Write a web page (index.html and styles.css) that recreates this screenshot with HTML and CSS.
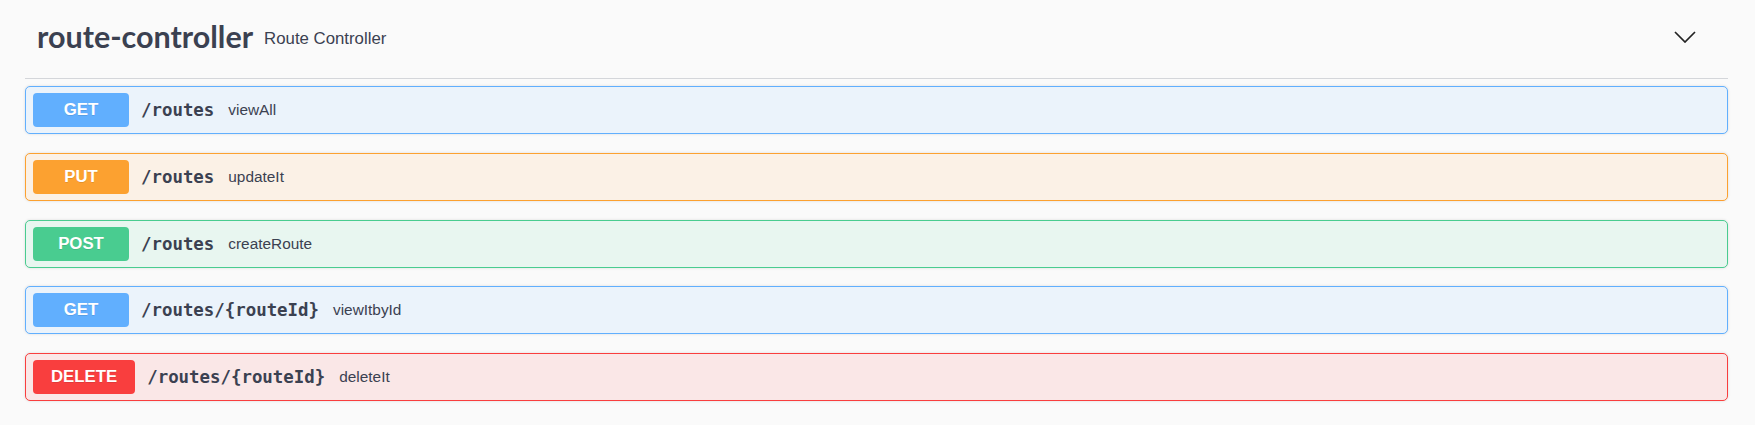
FILE: index.html
```html
<!DOCTYPE html>
<html>
<head>
<meta charset="utf-8">
<link rel="stylesheet" href="styles.css">
</head>
<body>
<div class="wrap">
  <div class="tag">
    <h3 class="tag-title">route-controller</h3>
    <small class="tag-desc">Route Controller</small>
    <svg class="arrow" viewBox="0 0 22 12" width="22" height="12"><path d="M1 1 L11 11 L21 1" fill="none" stroke="#222" stroke-width="1.7"/></svg>
  </div>
  <div class="op get">
    <span class="method">GET</span>
    <span class="path">/routes</span>
    <span class="desc">viewAll</span>
  </div>
  <div class="op put">
    <span class="method">PUT</span>
    <span class="path">/routes</span>
    <span class="desc">updateIt</span>
  </div>
  <div class="op post">
    <span class="method">POST</span>
    <span class="path">/routes</span>
    <span class="desc">createRoute</span>
  </div>
  <div class="op get">
    <span class="method">GET</span>
    <span class="path">/routes/{routeId}</span>
    <span class="desc">viewItbyId</span>
  </div>
  <div class="op delete">
    <span class="method">DELETE</span>
    <span class="path">/routes/{routeId}</span>
    <span class="desc">deleteIt</span>
  </div>
</div>
</body>
</html>
```

FILE: styles.css
```css
html, body {
  margin: 0;
  background: #fafafa;
  color: #3b4151;
}
.wrap {
  padding: 0 27px 0 25px;
}
.tag {
  display: flex;
  align-items: center;
  height: 78px;
  padding: 0 32px 0 12px;
  border-bottom: 1px solid #d4d6da;
  margin-bottom: 7px;
}
.tag-title {
  margin: 0;
  padding-bottom: 7px;
  font-family: Lato, "Liberation Sans", sans-serif;
  font-weight: 700;
  font-size: 30.5px;
  color: #3b4151;
}
.tag-desc {
  flex: 1;
  padding: 0 12px 0 11px;
  font-family: "Liberation Sans", Arial, sans-serif;
  font-size: 16.8px;
  color: #3b4151;
}
.arrow {
  display: block;
  margin-bottom: 4px;
}
.op {
  display: flex;
  align-items: center;
  height: 46px;
  padding: 0 7px;
  border: 1px solid #61affe;
  border-radius: 5px;
  box-shadow: 0 0 3px rgba(0,0,0,.12);
  margin-bottom: 18.8px;
}
.method {
  min-width: 96px;
  box-sizing: border-box;
  padding: 7px 18px;
  line-height: 20px;
  border-radius: 4px;
  text-align: center;
  font-family: "Liberation Sans", Arial, sans-serif;
  font-weight: 700;
  font-size: 16.8px;
  color: #fff;
  text-shadow: 0 1px 0 rgba(0,0,0,.1);
}
.path {
  padding: 0 14px 0 12px;
  font-family: "DejaVu Sans Mono", monospace;
  font-weight: 700;
  font-size: 17.4px;
  color: #3b4151;
}
.desc {
  font-family: "Liberation Sans", Arial, sans-serif;
  font-size: 15.4px;
  color: #3b4151;
}
.get { background: #ebf3fb; border-color: #61affe; }
.get .method { background: #61affe; }
.put { background: #fbf1e6; border-color: #fca130; }
.put .method { background: #fca130; }
.post { background: #e8f6f0; border-color: #49cc90; }
.post .method { background: #49cc90; }
.delete { background: #fae7e7; border-color: #f93e3e; }
.delete .method { background: #f93e3e; }
```
